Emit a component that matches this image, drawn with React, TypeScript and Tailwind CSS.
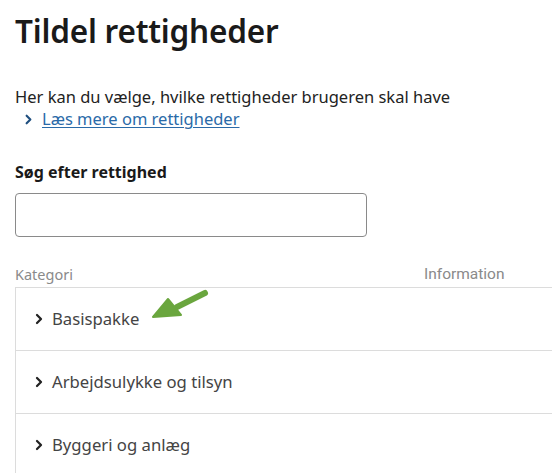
import { ChevronRight } from 'lucide-react';

const rows = ['Basispakke', 'Arbejdsulykke og tilsyn', 'Byggeri og anlæg'];

function Arrow() {
  return (
    <svg className="absolute left-[150px] top-[288px]" width="60" height="34" viewBox="0 0 60 34">
      <path d="M55 5 L27 19" stroke="#6aa63e" strokeWidth="6" strokeLinecap="round" />
      <path d="M3 29 L18 11 L31 27 Z" fill="#6aa63e" stroke="#6aa63e" strokeWidth="2" strokeLinejoin="round" />
    </svg>
  );
}

export default function App() {
  return (
    <div
      className="relative w-[552px] h-[473px] overflow-hidden bg-white text-[#1a1a1a] pl-[15px]"
      style={{ fontFamily: '"Noto Sans", "Open Sans", sans-serif' }}
    >
      {/* Title */}
      <h1 className="pt-[9px] text-[31.5px] leading-[44px] font-semibold tracking-[-0.2px]">Tildel rettigheder</h1>

      <p className="mt-[33px] text-[16.5px] leading-[22px] text-[#222]">
        Her kan du vælge, hvilke rettigheder brugeren skal have
      </p>
      <a href="#" className="flex items-center gap-[6px] pl-[6px] text-[16.5px] leading-[22px] text-[#2a6aa8]">
        <ChevronRight className="w-[15px] h-[15px]" strokeWidth={3.4} color="#1f4f7f" />
        <span className="underline underline-offset-2">Læs mere om rettigheder</span>
      </a>

      {/* Search */}
      <label className="block mt-[31px] text-[16px] leading-[22px] font-bold">Søg efter rettighed</label>
      <input
        className="block mt-[10px] w-[352px] h-[44px] border border-[#8a8a8a] rounded-[4px] px-2 outline-none"
        type="text"
      />

      {/* Table */}
      <div className="flex mt-[27px] text-[14.5px] leading-[20px] text-[#8a8a8a]">
        <span className="w-[409px]">Kategori</span>
        <span className="text-[15.5px]" style={{ fontFamily: 'Roboto, sans-serif' }}>Information</span>
      </div>
      <div className="mt-[3px] border-l border-t border-[#dcdcdc]">
        {rows.map((r) => (
          <div key={r} className="flex items-center h-[63px] border-b border-[#dcdcdc] pl-[15px] gap-[5px] text-[16.7px] text-[#444]">
            <ChevronRight className="w-[16px] h-[16px]" strokeWidth={3.4} color="#222" />
            <span>{r}</span>
          </div>
        ))}
      </div>

      <Arrow />
    </div>
  );
}
